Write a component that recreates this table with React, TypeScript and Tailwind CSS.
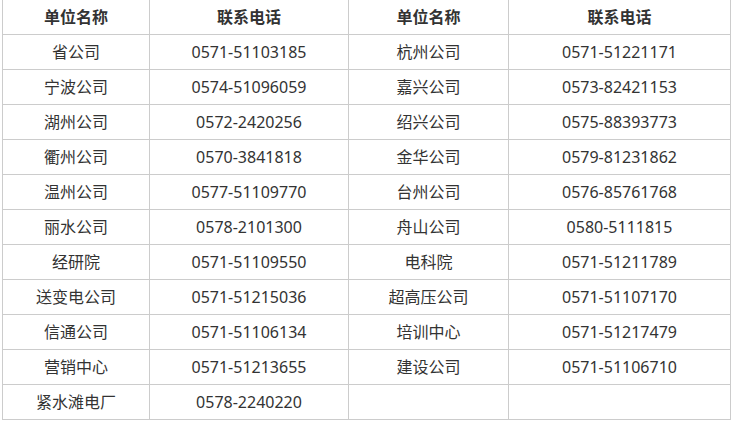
import React from 'react';

const rows: [string, string, string, string][] = [
  ['省公司', '0571-51103185', '杭州公司', '0571-51221171'],
  ['宁波公司', '0574-51096059', '嘉兴公司', '0573-82421153'],
  ['湖州公司', '0572-2420256', '绍兴公司', '0575-88393773'],
  ['衢州公司', '0570-3841818', '金华公司', '0579-81231862'],
  ['温州公司', '0577-51109770', '台州公司', '0576-85761768'],
  ['丽水公司', '0578-2101300', '舟山公司', '0580-5111815'],
  ['经研院', '0571-51109550', '电科院', '0571-51211789'],
  ['送变电公司', '0571-51215036', '超高压公司', '0571-51107170'],
  ['信通公司', '0571-51106134', '培训中心', '0571-51217479'],
  ['营销中心', '0571-51213655', '建设公司', '0571-51106710'],
  ['紧水滩电厂', '0578-2240220', '', ''],
];

const cell = 'h-[35px] flex items-center justify-center border-r border-b border-[#cccccc]';

export default function App() {
  return (
    <div className="bg-white w-[731px] h-[421px] overflow-hidden">
      <div
        className="ml-[2px] -mt-px grid grid-cols-[147px_199px_160px_222px] border-l border-t border-[#cccccc] text-[16px] text-[#333333]"
        style={{ fontFamily: '"Noto Sans", "Noto Sans CJK SC", sans-serif' }}
      >
        {/* Header */}
        {['单位名称', '联系电话', '单位名称', '联系电话'].map((h, i) => (
          <div key={i} className={`${cell} font-bold`}>
            {h}
          </div>
        ))}
        {rows.map((r, i) =>
          r.map((c, j) => (
            <div key={`${i}-${j}`} className={cell}>
              {c}
            </div>
          ))
        )}
      </div>
    </div>
  );
}
